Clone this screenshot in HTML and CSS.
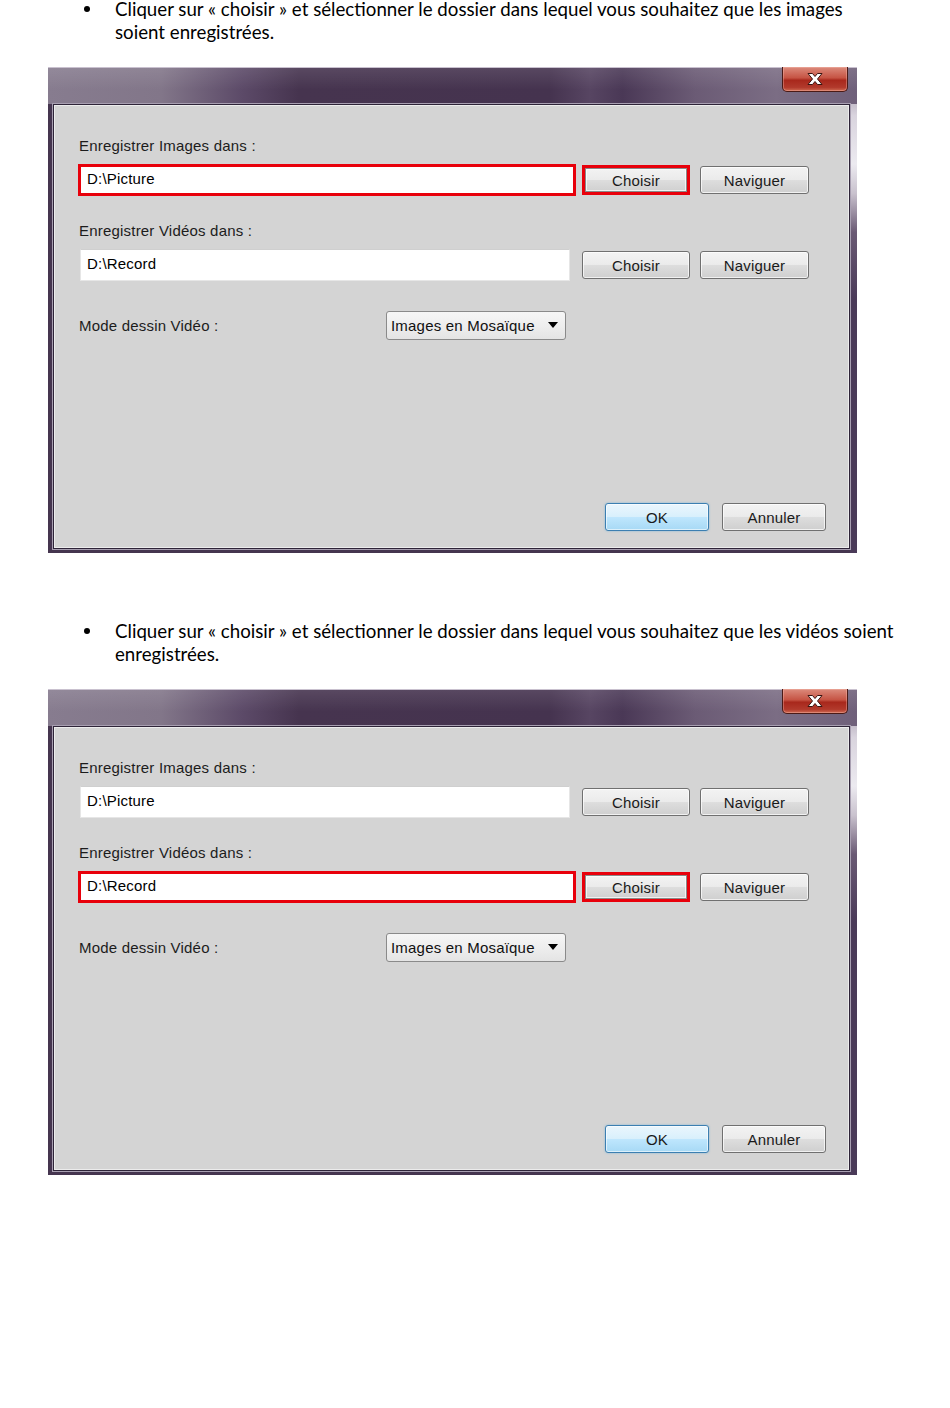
FILE: index.html
```html
<!DOCTYPE html>
<html lang="fr">

<head>
  <meta charset="UTF-8">
  <meta name="viewport" content="width=device-width, initial-scale=1.0">
  <title>Options d'enregistrement</title>
  <link rel="stylesheet" href="styles.css">
</head>

<body>
  <div class="page">
    <p class="note">
      <span class="dot"></span>
      <span class="note-text">Cliquer sur « choisir » et sélectionner le dossier dans lequel vous souhaitez que les images<br>soient enregistrées.</span>
    </p>

    <div class="dialog">
      <div class="titlebar">
        <div class="close-btn">
          <svg width="18" height="12" viewBox="0 0 18 12">
            <path d="M2 0.5h4.5l2.5 3 2.5-3h4.5l-4.5 5.5 4.5 5.5h-4.5l-2.5-3-2.5 3h-4.5l4.5-5.5z" fill="#fff" stroke="#3a1410" stroke-width="1"/>
          </svg>
        </div>
      </div>
      <div class="panel">
        <div class="label">Enregistrer Images dans :</div>
        <div class="row">
          <div class="field field-hl">D:\Picture</div>
          <div class="btn btn-hl">Choisir</div>
          <div class="btn">Naviguer</div>
        </div>
        <div class="label label-next">Enregistrer Vidéos dans :</div>
        <div class="row">
          <div class="field">D:\Record</div>
          <div class="btn">Choisir</div>
          <div class="btn">Naviguer</div>
        </div>
        <div class="mode-row">
          <div class="mode-label">Mode dessin Vidéo :</div>
          <div class="select">Images en Mosaïque<span class="arrow"></span></div>
        </div>
        <div class="footer">
          <div class="btn btn-ok">OK</div>
          <div class="btn btn-cancel">Annuler</div>
        </div>
      </div>
    </div>

    <p class="note note-second">
      <span class="dot"></span>
      <span class="note-text">Cliquer sur « choisir » et sélectionner le dossier dans lequel vous souhaitez que les vidéos soient<br>enregistrées.</span>
    </p>

    <div class="dialog">
      <div class="titlebar">
        <div class="close-btn">
          <svg width="18" height="12" viewBox="0 0 18 12">
            <path d="M2 0.5h4.5l2.5 3 2.5-3h4.5l-4.5 5.5 4.5 5.5h-4.5l-2.5-3-2.5 3h-4.5l4.5-5.5z" fill="#fff" stroke="#3a1410" stroke-width="1"/>
          </svg>
        </div>
      </div>
      <div class="panel">
        <div class="label">Enregistrer Images dans :</div>
        <div class="row">
          <div class="field">D:\Picture</div>
          <div class="btn">Choisir</div>
          <div class="btn">Naviguer</div>
        </div>
        <div class="label label-next">Enregistrer Vidéos dans :</div>
        <div class="row">
          <div class="field field-hl">D:\Record</div>
          <div class="btn btn-hl">Choisir</div>
          <div class="btn">Naviguer</div>
        </div>
        <div class="mode-row">
          <div class="mode-label">Mode dessin Vidéo :</div>
          <div class="select">Images en Mosaïque<span class="arrow"></span></div>
        </div>
        <div class="footer">
          <div class="btn btn-ok">OK</div>
          <div class="btn btn-cancel">Annuler</div>
        </div>
      </div>
    </div>
  </div>
</body>

</html>
```

FILE: styles.css
```css
body {
  margin: 0;
  padding: 0;
  background: #fff;
  color: #000;
  font-family: Lato, "Noto Sans", sans-serif;
}

.page {
  width: 950px;
  height: 1408px;
  overflow: hidden;
}

/* bullet paragraphs */
.note {
  display: flex;
  align-items: flex-start;
  margin: -2px 0 0;
  font-size: 18.7px;
  line-height: 23px;
}

.note-second {
  margin-top: 67px;
}

.dot {
  flex: none;
  width: 6px;
  height: 6px;
  margin: 8px 25px 0 84px;
  border-radius: 50%;
  background: #000;
}

.note-text {
  white-space: nowrap;
}

/* window */
.dialog {
  display: flex;
  flex-direction: column;
  box-sizing: border-box;
  width: 809px;
  height: 486px;
  margin: 23px 0 0 48px;
  background:
    linear-gradient(to bottom, #8a7c92 0, #d9d4de 10%, #eceaf0 20%, #c9c2ce 26%, #6a5a74 34%, #4a3a58 48%) no-repeat right top / 7px 100%,
    #45354f;
  font-family: "Liberation Sans", Arial, sans-serif;
  font-size: 15px;
  letter-spacing: 0.2px;
  color: #1c1c1c;
}

.titlebar {
  display: flex;
  justify-content: flex-end;
  align-items: flex-start;
  height: 37px;
  padding-right: 9px;
  background:
    linear-gradient(to bottom, rgba(255, 255, 255, 0.1), rgba(255, 255, 255, 0) 60%),
    linear-gradient(90deg, #877c8f 0%, #827689 14%, #5c4a68 24%, #46344f 31%, #45334f 62%, #574562 67%, #4a3856 71%, #6b5b75 80%, #7b6d84 90%, #6f607a 100%);
  border-top: 1px solid #c9c1cf;
  box-sizing: border-box;
}

.close-btn {
  display: flex;
  justify-content: center;
  align-items: center;
  width: 66px;
  height: 25px;
  margin-top: -1px;
  box-sizing: border-box;
  border: 1px solid #4a1a16;
  border-top: none;
  border-radius: 0 0 5px 5px;
  background: linear-gradient(to bottom, #dc8b7c 0%, #c65444 45%, #a8281c 55%, #b23a2c 85%, #cf6a52 100%);
  box-shadow: inset 0 0 0 1px rgba(255, 200, 190, 0.35);
}

.panel {
  display: flex;
  flex-direction: column;
  flex: 1;
  margin: 0 7px 4px 5px;
  padding: 32px 23px 17px 25px;
  background: #d4d4d4;
  border: 1px solid #2e2438;
  box-shadow: 0 0 0 1px #a89fb1, inset 0 0 0 1px #ececec;
}

.label {
  line-height: 18px;
  height: 18px;
}

.label-next {
  margin-top: 26px;
}

.row {
  display: flex;
  align-items: center;
  height: 32px;
  margin-top: 9px;
}

.field {
  display: flex;
  align-items: center;
  box-sizing: border-box;
  width: 490px;
  height: 32px;
  margin: 0 12px 0 1px;
  padding: 0 0 3px 6px;
  background: #fff;
  border: 1px solid #e6e6e6;
  border-top-color: #cfcfcf;
  color: #000;
}

.field-hl {
  width: 498px;
  margin: 0 6px 0 -1px;
  padding-left: 6px;
  border: 3px solid #e8000b;
}

.btn {
  display: flex;
  justify-content: center;
  align-items: center;
  box-sizing: border-box;
  width: 108px;
  height: 28px;
  border: 1px solid #707070;
  border-radius: 3px;
  background: linear-gradient(to bottom, #f3f3f3 0%, #ebebeb 48%, #dddddd 52%, #cfcfcf 100%);
  box-shadow: inset 0 0 0 1px rgba(255, 255, 255, 0.7);
  color: #1a1a1a;
}

.btn + .btn {
  width: 109px;
  margin-left: 10px;
}

.btn-hl {
  height: 30px;
  border: 3px solid #e8000b;
  border-radius: 0;
  box-shadow: inset 0 0 0 1px #8a8a8a, inset 0 0 0 2px rgba(255, 255, 255, 0.7);
}

.mode-row {
  display: flex;
  align-items: center;
  margin-top: 30px;
  height: 29px;
}

.mode-label {
  width: 307px;
}

.select {
  display: flex;
  align-items: center;
  justify-content: space-between;
  box-sizing: border-box;
  width: 180px;
  height: 29px;
  padding: 0 7px 1px 4px;
  border: 1px solid #8a8a8a;
  border-radius: 3px;
  background: linear-gradient(to bottom, #f6f6f6 0%, #eeeeee 50%, #e4e4e4 100%);
  color: #111;
}

.arrow {
  width: 0;
  height: 0;
  border-left: 5px solid transparent;
  border-right: 5px solid transparent;
  border-top: 6px solid #000;
}

.footer {
  display: flex;
  justify-content: flex-end;
  margin-top: auto;
}

.footer .btn {
  width: 104px;
}

.footer .btn + .btn {
  margin-left: 13px;
}

.btn-ok {
  border-color: #3c7fb1;
  background: linear-gradient(to bottom, #eaf6fd 0%, #d9f0fc 48%, #bee6fd 52%, #a7d9f5 100%);
  box-shadow: inset 0 0 0 1px rgba(255, 255, 255, 0.6), 0 0 2px rgba(60, 160, 220, 0.6);
}
```
